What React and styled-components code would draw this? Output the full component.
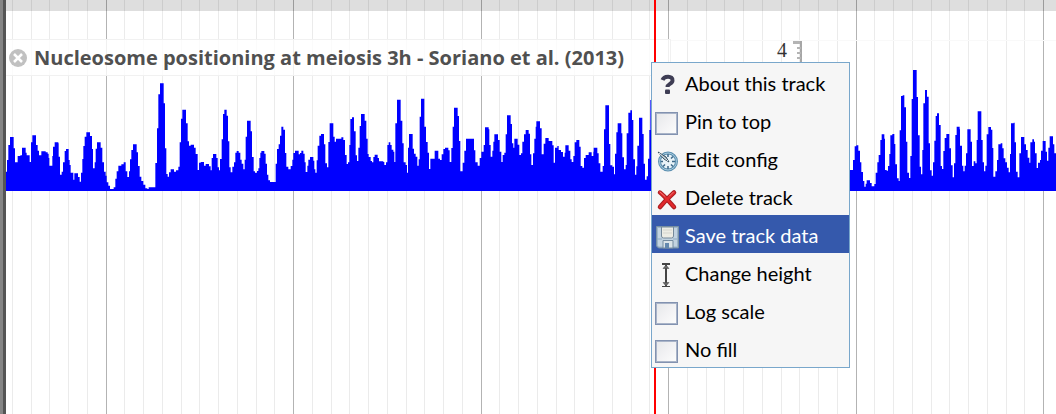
import React from "react";
import styled, { createGlobalStyle } from "styled-components";

const GlobalStyle = createGlobalStyle`
  *, *::before, *::after { box-sizing: border-box; }
  body { margin: 0; background: #fff; }
`;

/* Coverage signal: "start:level" steps, in thirds of a pixel, one string per segment. */
const SEGMENTS = [
  [0, "18:515 21:480 25:435 30:411 41:445 45:487 53:468 61:466 66:443 77:458 80:466 89:486 93:427 97:406 108:435 113:452 117:466 124:454 137:457 143:461 146:474 148:497 157:468 159:440 164:427 175:430 176:470 180:524 185:515 189:487 194:453 198:447 206:480 209:495 212:518 220:539 223:520 234:531 239:545 243:518 247:477 250:438 254:410 259:397 270:408 276:447 279:505 284:487 287:446 291:427 302:443 307:487 312:515 317:527 320:547 325:557 330:567 341:562 346:536 350:514 355:497 364:493 371:487 377:514 382:531 387:514 390:478 394:450 399:433 410:457 414:498 419:530 424:543 430:554 436:565 442:567 446:562 466:489 471:385 475:283 480:250 491:310 495:445 499:522 503:530 507:517 512:508 522:515 528:511 535:500 539:427 543:356 547:329 558:370 563:424 567:437 572:434 582:443 587:462 593:510 597:488 602:486 612:497 617:492 627:499 632:511 635:474 639:462 649:474 653:502 657:511"],
  [660, "0:477 5:418 9:342 13:329 20:347 24:424 28:502 32:517 37:500 42:487 46:458 50:453 56:458 61:479 65:491 70:508 74:479 77:410 81:362 92:394 96:471 101:514 105:518 111:513 115:505 118:474 121:458 124:453 133:461 137:491 141:524 145:541 150:546 167:491 171:447 176:433 180:407 184:380 190:389 195:459 199:500 205:508 212:498 217:479 220:459 225:452 236:463 240:459 244:452 250:461 254:487 257:516 262:497 265:479 270:471 280:482 283:508 286:518 290:481 293:437 298:407 303:402 312:433 316:490 321:502 325:426 329:370 340:410 344:425 348:416 364:412 370:420 375:465 380:492 384:487 388:435 391:357 396:352 402:394 407:466 411:483 415:443 419:378 423:342 434:362 439:416 443:462 446:471 452:483 456:487 460:471 464:464 473:474 477:484 490:486 493:495 498:487 502:435 506:427 511:435 515:449 520:455 523:486 526:370 531:299 542:362 547:430 551:487 557:495 561:518 564:443 567:402 578:446 582:461 587:470 592:497 596:478 599:350 603:296 613:380 618:426 623:458 627:507 631:476 644:452 655:476"],
  [1320, "0:480 5:463 10:447 15:443 25:451 29:486 34:444 38:380 42:323 53:348 57:423 61:514 68:488 73:452 78:416 102:451 106:487 113:497 119:474 124:455 131:435 135:382 146:388 148:435 152:470 157:452 160:425 163:403 174:420 179:455 184:486 188:465 193:458 197:403 201:346 212:372 216:430 220:443 223:416 233:434 238:465 243:460 247:425 252:403 257:390 266:401 270:463 274:495 279:460 283:416 287:380 289:364 300:385 305:463 311:431 316:414 326:423 337:436 341:488 345:443 352:438 356:450 363:456 369:470 374:458 376:436 386:452 391:478 395:486 400:468 404:427 409:420 418:440 422:498 427:503 432:474 437:465 446:457 455:468 460:455 461:443 472:460 476:490 481:515 488:498 492:388 496:316 507:432 511:496 517:500 522:523 525:461 529:397 533:370 544:400 547:472 552:508 557:495 560:400 565:338 571:331 576:360 580:478 585:524 589:499 592:437 597:353 607:402 611:491 615:539 620:529 624:476 628:390 631:300 644:420 656:510"],
  [2520, "24:510 39:480 44:439 49:436 55:452 60:487 64:516 69:543 73:560 77:551 80:541 90:549 95:559 103:552 107:518 112:487 116:465 121:420 125:403 133:416 135:510 140:512 144:498 148:462 151:406 157:402 163:432 166:493 171:535 176:543 179:391 183:288 188:286 193:322 198:425 202:518 207:534 211:468 215:297 219:210 230:291 234:406 239:500 243:523 247:450 250:310 255:270 261:290 266:430 270:511 275:527 279:487 283:422 287:348 291:340 297:375 302:498 306:507 310:453 314:414 319:402 328:445 333:496 338:532 342:490 346:405 350:380 359:388 360:437 366:497 370:514 374:497 378:460 382:388 392:425 396:498 401:484 406:490 410:420 413:334 424:420 428:487 432:514 436:497 440:403 445:381 453:389 457:444 460:530 466:514 471:480 475:433 482:430 487:445 491:475 496:487 501:503 506:517 510:462 513:370 521:368 524:427 528:515 533:532 538:460 543:411 553:433 558:450 563:473 568:488 571:427 577:418 582:425 585:460 590:504 594:488 600:480 603:452 608:423 617:455 621:482 625:443 629:409 639:433 643:460 648:480"],
];

const TOP = 210;
const BASE = 573;
const ORIGIN = 18;

const signalPath = (() => {
  let d = `M0 ${BASE - TOP}`;
  SEGMENTS.forEach(([offset, steps]) => {
    steps.split(" ").forEach((step) => {
      const [x, y] = step.split(":").map(Number);
      d += `H${x + offset - ORIGIN}V${y - TOP}`;
    });
  });
  return `${d}H3150V${BASE - TOP}Z`;
})();

const Browser = styled.main`
  position: relative;
  min-height: 100vh;
  overflow: hidden;
  border-left: 3px solid #858585;
  box-shadow: inset 3px 0 #555;
  padding-left: 3px;
`;

const GridLines = styled.svg`
  position: absolute;
  inset: 0 0 0 3px;
  width: 100%;
  height: 100%;
  z-index: -1;
`;

const Ruler = styled.header`
  height: 11px;
  background: rgba(0, 0, 0, 0.13);
`;

const Track = styled.section`
  display: flex;
  flex-direction: column;
  padding-top: 28px;
`;

const TrackHead = styled.div`
  display: flex;
  height: 37px;
`;

const TrackLabel = styled.div`
  display: flex;
  flex: none;
  align-items: center;
  gap: 7px;
  min-width: 665px;
  padding-left: 3px;
  border: solid #f1f1f1;
  border-width: 1px 1px 1px 0;
  background: rgba(255, 255, 255, 0.8);
`;

const CloseButton = styled.button`
  width: 18px;
  height: 18px;
  padding: 0;
  border: 0;
  background: none;
  svg { display: block; }
`;

const Title = styled.h1`
  margin: 0;
  color: #505050;
  font: 700 20px/24px "Open Sans", sans-serif;
  white-space: nowrap;
`;

const Scale = styled.div`
  display: flex;
  flex: 1;
  align-items: flex-start;
  gap: 6px;
  margin-top: 1px;
  padding-left: 106px;
  border-top: 1px solid #f9f9f9;
  color: #333;
  font: 20px/18px "Liberation Serif", serif;
`;

const Signal = styled.svg`
  display: block;
  flex: none;
  width: 1050px;
  height: 121px;
  margin-top: -6px;
`;

const PositionLine = styled.div`
  position: absolute;
  top: 0;
  bottom: 0;
  left: 651px;
  width: 2px;
  background: #f00;
`;

const Menu = styled.div`
  position: absolute;
  top: 62px;
  left: 648px;
  display: flex;
  flex-direction: column;
  width: 199px;
  border: 1px solid #79a7cb;
  background: #f6f6f6;
  font: 20px/24px Lato, sans-serif;
`;

const itemStyle = ({ $active }) => `
  display: flex;
  align-items: center;
  gap: 6px;
  height: 38px;
  padding: 2px 0 0 3px;
  border: 0;
  background: ${$active ? "#3559ac" : "transparent"};
  color: ${$active ? "#fff" : "#000"};
  font: inherit;
  text-align: left;
  white-space: nowrap;
`;

const MenuButton = styled.button`${itemStyle}`;
const MenuOption = styled.label`${itemStyle}`;

const IconSlot = styled.span`
  flex: none;
  width: 24px;
  padding-top: 4px;
  svg { display: block; }
`;

const Tick = styled.input`
  appearance: none;
  flex: none;
  width: 23px;
  height: 23px;
  margin: 4px 1px 0 0;
  border: 1px solid #8292b0;
  background: linear-gradient(135deg, #e6e7ea, #fdfdfd);
  box-shadow: inset 0 0 0 1px #a9b4c8;
`;

function Grid() {
  const lines = [];
  for (let i = -5; i < 120; i += 1) {
    const major = i % 10 === 0;
    lines.push(
      <rect key={i} x={Math.floor(106 + 18.75 * i) - 6} y="0" width="1" height="100%" fill={major ? "#b3b3b3" : "#ebebeb"} />
    );
  }
  return <GridLines aria-hidden="true">{lines}</GridLines>;
}

const HelpIcon = () => (
  <svg width="24" height="24" viewBox="0 0 24 24" fill="none">
    <path d="M7.500 7C9 2.500 18 2.500 17.500 7.500c0 3.500-5 3.200-5 6.500" stroke="#3e3d54" strokeWidth="4" />
    <rect x="10" y="16.500" width="5" height="4.500" rx="1" fill="#3e3d54" />
  </svg>
);

const ConfigIcon = () => (
  <svg width="24" height="24" viewBox="0 0 24 24" fill="none">
    <circle cx="13" cy="12.500" r="8.500" fill="#e9f3f8" stroke="#5b8fb0" strokeWidth="3" />
    <circle cx="13" cy="12.500" r="8.500" stroke="#a9cbdd" strokeWidth="1" />
    <path d="M13 5v3M13 17v3M6 12.500h2M17 12.500h3M8 17.500l2-2M16 15.500l2 2M16 9.500l2-2" stroke="#3b6787" strokeWidth="1.500" />
    <path d="M3 3l8 5 3 5-5-3-6-7z" fill="#96a6ae" stroke="#344f60" />
    <path d="M4 4l9 8" stroke="#e6edf0" />
  </svg>
);

const DeleteIcon = () => (
  <svg width="24" height="24" viewBox="0 0 24 24" fill="none" strokeLinecap="round">
    <path d="M5 5.500c3 2 9 9 14 14.500M19 5.500C14 10 9 15 5 20" stroke="#a91d20" strokeWidth="4.500" />
    <path d="M5 5.500c3 2 9 9 14 14.500M19 5.500C14 10 9 15 5 20" stroke="#e1292c" strokeWidth="2.500" />
    <path d="M5 5l5 4.500M18.500 5l-4 4" stroke="#f0787a" />
  </svg>
);

const SaveIcon = () => (
  <svg width="24" height="24" viewBox="0 0 24 24">
    <path d="M1.500 1.500h22v21.500h-20l-2-2z" fill="#9cb4ca" stroke="#7891a4" />
    <path d="M3 3h19v18.500H4l-1-1z" fill="#c2d3e0" />
    <path d="M6.500 2h12v9q0 2-2 2h-8q-2 0-2-2z" fill="#ecece4" stroke="#75899a" />
    <path d="M8 5h9M8 8h9" stroke="#d5d5ce" />
    <path d="M8 15.500h10V23H8z" fill="#dbe4e8" stroke="#758ca0" />
    <path d="M10 18h4v5h-4z" fill="#6489ae" />
    <path d="M2 14h5M18 14h4" stroke="#8daac3" />
  </svg>
);

const HeightIcon = () => (
  <svg width="24" height="24" viewBox="0 0 24 24" fill="none" stroke="#444">
    <path d="M7 1h8M7 24h8" strokeWidth="2" />
    <path d="M11 2v21" strokeWidth="2" />
    <path d="M8 5.500l3-3.500 3 3.500zM8 19.500l3 3.500 3-3.500z" fill="#666" strokeWidth="0.500" />
  </svg>
);

const ITEMS = [
  { text: "About this track", Icon: HelpIcon },
  { text: "Pin to top" },
  { text: "Edit config", Icon: ConfigIcon },
  { text: "Delete track", Icon: DeleteIcon },
  { text: "Save track data", Icon: SaveIcon, active: true },
  { text: "Change height", Icon: HeightIcon },
  { text: "Log scale" },
  { text: "No fill" },
];

export default function App() {
  return (
    <>
      <GlobalStyle />
      <Browser>
        <Grid />
        <Ruler />
        <Track>
          <TrackHead>
            <TrackLabel>
              <CloseButton aria-label="Close track">
                <svg width="18" height="18" viewBox="0 0 18 18">
                  <circle cx="9" cy="9" r="9" fill="#c1c1c1" />
                  <path d="M5 5l8 8M13 5l-8 8" stroke="#fff" strokeWidth="2.500" />
                </svg>
              </CloseButton>
              <Title>Nucleosome positioning at meiosis 3h - Soriano et al. (2013)</Title>
            </TrackLabel>
            <Scale>
              <span>4</span>
              <svg width="10" height="35" viewBox="0 0 10 35" fill="none">
                <path d="M0 1.500h9" stroke="#b4b4b4" strokeWidth="3" />
                <path d="M8 0v35" stroke="#a6a6a6" strokeWidth="2" />
                <path d="M4 7h4M4 12h4M4 17h4" stroke="#b4b4b4" strokeWidth="2" />
              </svg>
            </Scale>
          </TrackHead>
          <Signal viewBox="0 0 3150 363" preserveAspectRatio="none" role="img" aria-label="Nucleosome coverage">
            <path d={signalPath} fill="#00f" />
          </Signal>
        </Track>
        <PositionLine />
        <Menu role="group" aria-label="Track menu">
          {ITEMS.map(({ text, Icon, active }) =>
            Icon ? (
              <MenuButton key={text} type="button" $active={active}>
                <IconSlot><Icon /></IconSlot>
                {text}
              </MenuButton>
            ) : (
              <MenuOption key={text}>
                <Tick type="checkbox" />
                {text}
              </MenuOption>
            )
          )}
        </Menu>
      </Browser>
    </>
  );
}
